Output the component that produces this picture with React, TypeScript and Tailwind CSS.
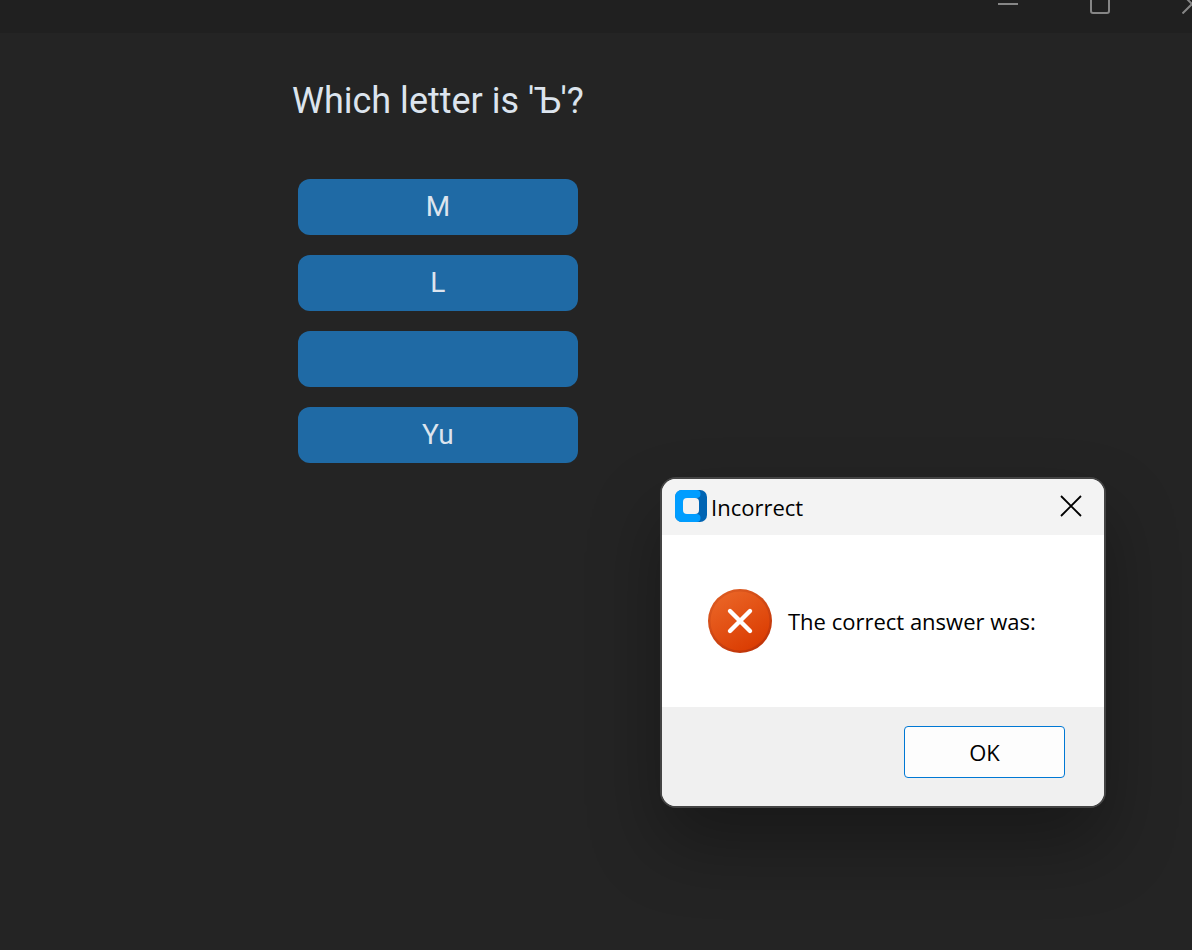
const answers = [
  { id: 'm', text: 'M' },
  { id: 'l', text: 'L' },
  { id: 'hard-sign', text: '' },
  { id: 'yu', text: 'Yu' },
];

function TitleBar() {
  return (
    <header className="-mt-[25px] -mr-[46px] flex h-[58px] justify-end bg-[#202020] text-[#868686]">
      <button aria-label="Minimize" className="flex w-[92px] items-center justify-center">
        <svg width="20" height="20" viewBox="0 0 20 20" fill="none" stroke="currentColor" strokeWidth="2">
          <path d="M0 10H20" />
        </svg>
      </button>
      <button aria-label="Maximize" className="flex w-[92px] items-center justify-center">
        <svg width="20" height="20" viewBox="0 0 20 20" fill="none" stroke="currentColor" strokeWidth="2">
          <rect x="1" y="1" width="18" height="18" rx="2" />
        </svg>
      </button>
      <button aria-label="Close" className="flex w-[92px] items-center justify-center">
        <svg width="20" height="20" viewBox="0 0 20 20" fill="none" stroke="currentColor" strokeWidth="2">
          <path d="M0.5 0.5L19.5 19.5M19.5 0.5L0.5 19.5" />
        </svg>
      </button>
    </header>
  );
}

function AppIcon() {
  return (
    <svg width="32" height="32" viewBox="0 0 32 32" aria-hidden="true">
      <rect width="32" height="32" rx="7" fill="#0064b3" />
      <path
        fill="#009dff"
        d="M7 0H21.5A4 4 0 0 1 21.5 8H20V24H21.5A4 4 0 0 1 21.5 32H7A7 7 0 0 1 0 25V7A7 7 0 0 1 7 0Z"
      />
      <rect x="8" y="8" width="16" height="16" rx="4" fill="#f3f3f3" />
    </svg>
  );
}

function ErrorIcon() {
  return (
    <svg width="64" height="64" viewBox="0 0 64 64" fill="none" aria-hidden="true">
      <defs>
        <linearGradient id="disc" x1="14" y1="4" x2="48" y2="60" gradientUnits="userSpaceOnUse">
          <stop stopColor="#ea6526" />
          <stop offset="1" stopColor="#da3b01" />
        </linearGradient>
        <linearGradient id="rim" x1="14" y1="4" x2="48" y2="60" gradientUnits="userSpaceOnUse">
          <stop stopColor="#dd5a20" />
          <stop offset="1" stopColor="#c03408" />
        </linearGradient>
      </defs>
      <circle cx="32" cy="32" r="32" fill="url(#rim)" />
      <circle cx="32" cy="32" r="29.5" fill="url(#disc)" />
      <path d="M22 22L42 42M42 22L22 42" stroke="#fff" strokeWidth="4.4" strokeLinecap="round" />
    </svg>
  );
}

function ResultDialog() {
  return (
    <section
      role="alertdialog"
      aria-labelledby="result-title"
      aria-describedby="result-text"
      className="absolute top-[477px] left-[660px] w-[446px] overflow-hidden rounded-2xl border-2 border-[#444444] bg-white font-['Open_Sans',sans-serif] text-[22px] leading-8 text-black shadow-[0_36px_72px_rgba(0,0,0,0.32)]"
    >
      <div className="flex h-14 items-center bg-[#f3f3f3] pr-5 pb-0.5 pl-[13px]">
        <AppIcon />
        <h2 id="result-title" className="ml-1 flex-1 pt-0.5">
          Incorrect
        </h2>
        <button aria-label="Close" className="p-0.5">
          <svg width="22" height="22" viewBox="0 0 22 22" fill="none" stroke="#000" strokeWidth="1.8">
            <path d="M1 1L21 21M21 1L1 21" />
          </svg>
        </button>
      </div>
      <div className="flex h-[172px] items-center gap-4 px-[46px]">
        <ErrorIcon />
        <p id="result-text" className="whitespace-nowrap">
          The correct answer was:
        </p>
      </div>
      <div className="flex justify-end bg-[#f0f0f0] px-[39px] pt-[19px] pb-7">
        <button className="h-[52px] w-[161px] rounded-sm border border-[#0078d4] bg-[#fdfdfd]">OK</button>
      </div>
    </section>
  );
}

export default function App() {
  return (
    <div className="relative flex min-h-screen flex-col overflow-hidden bg-[#242424] font-[Roboto,sans-serif] text-[#dce4ee]">
      <TitleBar />
      <main className="flex w-fit flex-col items-center pt-11 pl-[292px]">
        <h1 className="text-4xl leading-[48px] whitespace-nowrap">Which letter is 'Ъ'?</h1>
        <div className="mt-[54px] flex flex-col gap-5">
          {answers.map(({ id, text }) => (
            <button
              key={id}
              aria-label={text || 'Blank answer'}
              className="h-14 w-[280px] rounded-xl bg-[#1f6aa5] text-[28px] leading-8"
            >
              {text}
            </button>
          ))}
        </div>
      </main>
      <ResultDialog />
    </div>
  );
}
